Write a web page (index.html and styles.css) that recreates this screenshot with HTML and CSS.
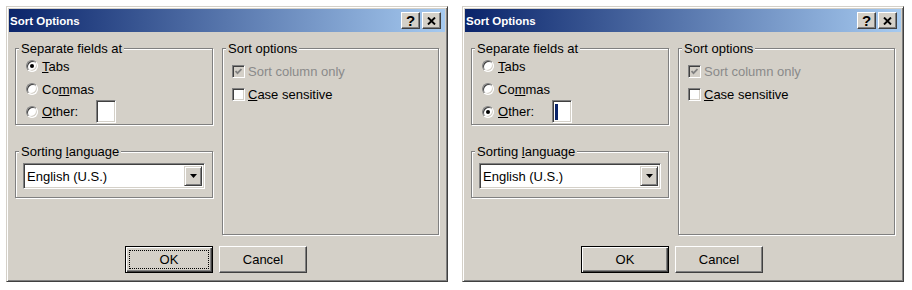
FILE: index.html
```html
<!DOCTYPE html>
<html lang="en">
<head>
  <meta charset="UTF-8" />
  <title>Sort Options</title>
  <link rel="stylesheet" href="styles.css">
</head>
<body>

<div class="screen">

  <!-- dialog 1: Tabs selected -->
  <div class="dialog">
    <div class="titlebar">
      <span class="title">Sort Options</span>
      <span class="caption-btns">
        <span class="cap-btn cap-help">?</span>
        <span class="cap-btn"><svg width="9" height="8" viewBox="0 0 9 8"><path d="M1 0.5 L8 7.5 M8 0.5 L1 7.5" stroke="#000" stroke-width="1.9"/></svg></span>
      </span>
    </div>
    <div class="dialog-body">
      <div class="left-col">
        <div class="group sep-group">
          <div class="group-title">Separate fields at</div>
          <div class="options">
            <div class="opt"><span class="radio checked"></span><span><u>T</u>abs</span></div>
            <div class="opt"><span class="radio"></span><span>Co<u>m</u>mas</span></div>
            <div class="opt opt-other"><span class="radio"></span><span><u>O</u>ther:</span><span class="textbox"></span></div>
          </div>
        </div>
        <div class="group lang-group">
          <div class="group-title">Sorting <u>l</u>anguage</div>
          <div class="combo">
            <span class="combo-text">English (U.S.)</span>
            <span class="combo-btn"><svg width="7" height="4" viewBox="0 0 7 4"><polygon points="0,0 7,0 3.5,4" fill="#000"/></svg></span>
          </div>
        </div>
      </div>
      <div class="group sort-group">
        <div class="group-title">Sort options</div>
        <div class="checks">
          <div class="check-row disabled"><span class="checkbox"><svg width="7" height="7" viewBox="0 0 7 7"><polyline points="0.5,3 2.5,5.2 6.5,1" fill="none" stroke="#808080" stroke-width="1.8"/></svg></span><span>Sort column only</span></div>
          <div class="check-row"><span class="checkbox"></span><span><u>C</u>ase sensitive</span></div>
        </div>
      </div>
    </div>
    <div class="buttons">
      <button class="btn btn-default btn-focus">OK</button>
      <button class="btn">Cancel</button>
    </div>
  </div>

  <!-- dialog 2: Other selected -->
  <div class="dialog">
    <div class="titlebar">
      <span class="title">Sort Options</span>
      <span class="caption-btns">
        <span class="cap-btn cap-help">?</span>
        <span class="cap-btn"><svg width="9" height="8" viewBox="0 0 9 8"><path d="M1 0.5 L8 7.5 M8 0.5 L1 7.5" stroke="#000" stroke-width="1.9"/></svg></span>
      </span>
    </div>
    <div class="dialog-body">
      <div class="left-col">
        <div class="group sep-group">
          <div class="group-title">Separate fields at</div>
          <div class="options">
            <div class="opt"><span class="radio"></span><span><u>T</u>abs</span></div>
            <div class="opt"><span class="radio"></span><span>Co<u>m</u>mas</span></div>
            <div class="opt opt-other"><span class="radio checked"></span><span><u>O</u>ther:</span><span class="textbox"><span class="caret"></span></span></div>
          </div>
        </div>
        <div class="group lang-group">
          <div class="group-title">Sorting <u>l</u>anguage</div>
          <div class="combo">
            <span class="combo-text">English (U.S.)</span>
            <span class="combo-btn"><svg width="7" height="4" viewBox="0 0 7 4"><polygon points="0,0 7,0 3.5,4" fill="#000"/></svg></span>
          </div>
        </div>
      </div>
      <div class="group sort-group">
        <div class="group-title">Sort options</div>
        <div class="checks">
          <div class="check-row disabled"><span class="checkbox"><svg width="7" height="7" viewBox="0 0 7 7"><polyline points="0.5,3 2.5,5.2 6.5,1" fill="none" stroke="#808080" stroke-width="1.8"/></svg></span><span>Sort column only</span></div>
          <div class="check-row"><span class="checkbox"></span><span><u>C</u>ase sensitive</span></div>
        </div>
      </div>
    </div>
    <div class="buttons">
      <button class="btn btn-default">OK</button>
      <button class="btn">Cancel</button>
    </div>
  </div>

</div>

</body>
</html>
```

FILE: styles.css
```css
html, body {
  margin: 0;
  padding: 0;
  background: #ffffff;
  color: #000000;
  font-family: "Liberation Sans", Arial, sans-serif;
  font-size: 13px;
}

.screen {
  display: flex;
  gap: 14px;
  padding: 6px 0 0 6px;
}

.dialog {
  width: 442px;
  height: 276px;
  box-sizing: border-box;
  background: #d4d0c8;
  border: 1px solid;
  border-color: #d4d0c8 #404040 #404040 #d4d0c8;
  box-shadow: inset 1px 1px #ffffff, inset -1px -1px #808080;
  padding: 2px;
  display: flex;
  flex-direction: column;
}

.titlebar {
  height: 23px;
  display: flex;
  align-items: center;
  justify-content: space-between;
  padding: 0 4px 0 1px;
  background: linear-gradient(to right, #0a246a, #a6caf0);
}

.title {
  color: #ffffff;
  font-weight: bold;
  font-size: 11.5px;
}

.caption-btns {
  display: flex;
  gap: 2px;
}

.cap-btn {
  width: 19px;
  height: 17px;
  box-sizing: border-box;
  background: #d4d0c8;
  border: 1px solid;
  border-color: #ffffff #404040 #404040 #ffffff;
  box-shadow: inset -1px -1px #808080, inset 1px 1px #d4d0c8;
  display: flex;
  align-items: center;
  justify-content: center;
}

.cap-help {
  font-weight: bold;
  font-size: 15px;
  line-height: 1;
}

.dialog-body {
  display: flex;
  gap: 9px;
  padding: 16px 6px 0;
}

.left-col {
  width: 198px;
  display: flex;
  flex-direction: column;
  gap: 26px;
}

.group {
  box-sizing: border-box;
  border: 1px solid #808080;
  box-shadow: 1px 1px 0 #ffffff, inset 1px 1px 0 #ffffff;
}

.sep-group { height: 77px; }
.lang-group { height: 47px; }

.sort-group {
  width: 217px;
  height: 187px;
}

.group-title {
  display: table;
  margin: -8px 0 0 3px;
  padding: 0 2px;
  line-height: 15px;
  background: #d4d0c8;
}

.options {
  display: flex;
  flex-direction: column;
  gap: 3px;
  padding-left: 10px;
}

.opt {
  display: flex;
  align-items: center;
  gap: 4px;
  height: 20px;
}

.opt-other {
  height: 23px;
  margin-top: -2px;
}

.radio {
  width: 12px;
  height: 12px;
  flex-shrink: 0;
  box-sizing: border-box;
  border-radius: 50%;
  border: 1px solid;
  border-color: #808080 #ffffff #ffffff #808080;
  box-shadow: inset 1px 1px #404040, inset -1px -1px #d4d0c8;
  background: #ffffff;
  display: flex;
  align-items: center;
  justify-content: center;
}

.radio.checked::after {
  content: "";
  width: 4px;
  height: 4px;
  border-radius: 50%;
  background: #000000;
}

.textbox {
  width: 20px;
  height: 23px;
  margin-left: 14px;
  box-sizing: border-box;
  background: #ffffff;
  border: 1px solid;
  border-color: #808080 #ffffff #ffffff #808080;
  box-shadow: inset 1px 1px #404040, inset -1px -1px #d4d0c8;
  display: flex;
  align-items: center;
  padding-left: 2px;
}

.caret {
  width: 3px;
  height: 16px;
  background: #0a246a;
}

.combo {
  margin: 4px 7px 0;
  height: 26px;
  box-sizing: border-box;
  display: flex;
  align-items: stretch;
  background: #ffffff;
  border: 1px solid;
  border-color: #808080 #ffffff #ffffff #808080;
  box-shadow: inset 1px 1px #404040, inset -1px -1px #d4d0c8;
  padding: 2px;
}

.combo-text {
  flex: 1;
  display: flex;
  align-items: center;
  padding-left: 1px;
}

.combo-btn {
  width: 18px;
  box-sizing: border-box;
  background: #d4d0c8;
  border: 1px solid;
  border-color: #d4d0c8 #404040 #404040 #d4d0c8;
  box-shadow: inset 1px 1px #ffffff, inset -1px -1px #808080;
  display: flex;
  align-items: center;
  justify-content: center;
}

.checks {
  display: flex;
  flex-direction: column;
  gap: 3px;
  padding: 5px 0 0 9px;
}

.check-row {
  display: flex;
  align-items: center;
  gap: 3px;
  height: 20px;
}

.check-row.disabled {
  color: #8a8a8a;
}

.checkbox {
  width: 13px;
  height: 13px;
  flex-shrink: 0;
  box-sizing: border-box;
  background: #ffffff;
  border: 1px solid;
  border-color: #808080 #ffffff #ffffff #808080;
  box-shadow: inset 1px 1px #404040, inset -1px -1px #d4d0c8;
  display: flex;
  align-items: center;
  justify-content: center;
}

.check-row.disabled .checkbox {
  background: #d4d0c8;
}

.buttons {
  display: flex;
  gap: 6px;
  padding: 11px 0 0 116px;
}

.btn {
  width: 88px;
  height: 27px;
  padding: 0;
  font-family: inherit;
  font-size: 13px;
  color: #000000;
  background: #d4d0c8;
  border: 1px solid;
  border-color: #ffffff #404040 #404040 #ffffff;
  box-shadow: inset -1px -1px #808080, inset 1px 1px #d4d0c8;
}

.btn-default {
  border-color: #000000;
  box-shadow: inset 1px 1px #ffffff, inset -1px -1px #404040, inset -2px -2px #808080;
}

.btn-focus {
  outline: 1px dotted #000000;
  outline-offset: -5px;
}
```
